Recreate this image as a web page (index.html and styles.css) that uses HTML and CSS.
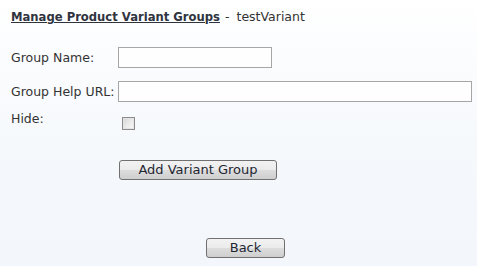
FILE: index.html
```html
<!DOCTYPE html>
<html>
<head>
<meta charset="utf-8">
<link rel="stylesheet" href="styles.css">
</head>
<body>
<div class="page">
  <div class="title"><a class="title-link" href="#">Manage Product Variant Groups</a><span class="sep">-</span><span class="name">testVariant</span></div>
  <div class="form">
    <label class="lbl">Group Name:</label>
    <div class="field"><input class="txt short" type="text"></div>
    <label class="lbl">Group Help URL:</label>
    <div class="field"><input class="txt long" type="text"></div>
    <label class="lbl lbl-top">Hide:</label>
    <div class="field"><input class="chk" type="checkbox"></div>
  </div>
  <div class="actions"><button class="btn btn-add" type="button">Add Variant Group</button></div>
  <div class="back-row"><button class="btn btn-back" type="button">Back</button></div>
</div>
</body>
</html>
```
FILE: styles.css
```css
html, body {
  margin: 0;
  padding: 0;
  height: 100%;
}
body {
  background: linear-gradient(to bottom, #ffffff 0px, #fbfcfe 60px, #f6f9fc 140px, #f3f6fa 266px);
  font-family: "DejaVu Sans", Verdana, sans-serif;
  font-size: 12.5px;
  color: #333;
}
.page {
  padding: 9px 5px 0 11px;
}
.title {
  line-height: 15px;
  height: 15px;
  white-space: nowrap;
}
.title-link {
  font-weight: bold;
  font-size: 11.6px;
  color: #2f3440;
  text-decoration: underline;
}
.sep {
  margin: 0 7px 0 5px;
}
.name {
  color: #333;
}
.form {
  margin-top: 23px;
  display: grid;
  grid-template-columns: 107px 1fr;
  row-gap: 13px;
  align-items: center;
}
.lbl {
  line-height: 15px;
  color: #333;
  white-space: nowrap;
}
.lbl-top {
  align-self: start;
  margin-top: -4px;
}
.field {
  display: flex;
  align-items: center;
}
.txt {
  box-sizing: border-box;
  height: 21px;
  margin: 0;
  border: 1px solid #a6a6a6;
  background: #fefefe;
  font-family: inherit;
  font-size: 12px;
}
.short { width: 154px; }
.long { width: 354px; }
.chk {
  -webkit-appearance: none;
  appearance: none;
  box-sizing: border-box;
  width: 13px;
  height: 13px;
  margin: 2px 0 0 4px;
  border: 1px solid #8c8c8c;
  background: linear-gradient(135deg, #d4d4d4 0%, #ececec 55%, #fafafa 100%);
  box-shadow: inset 0 0 0 1px #e4e4e4;
}
.actions {
  margin-top: 30px;
  padding-left: 108px;
  display: flex;
}
.btn {
  box-sizing: border-box;
  height: 20px;
  margin: 0;
  padding: 0;
  border: 1px solid #707070;
  border-radius: 3px;
  background: linear-gradient(to bottom, #f2f2f2 0%, #ebebeb 50%, #dddddd 50%, #cfcfcf 100%);
  font-family: "DejaVu Sans", Verdana, sans-serif;
  font-size: 13px;
  line-height: 16px;
  color: #1f2733;
}
.btn-add { width: 158px; }
.back-row {
  margin-top: 58px;
  padding-left: 195px;
  display: flex;
}
.btn-back { width: 79px; }
```
